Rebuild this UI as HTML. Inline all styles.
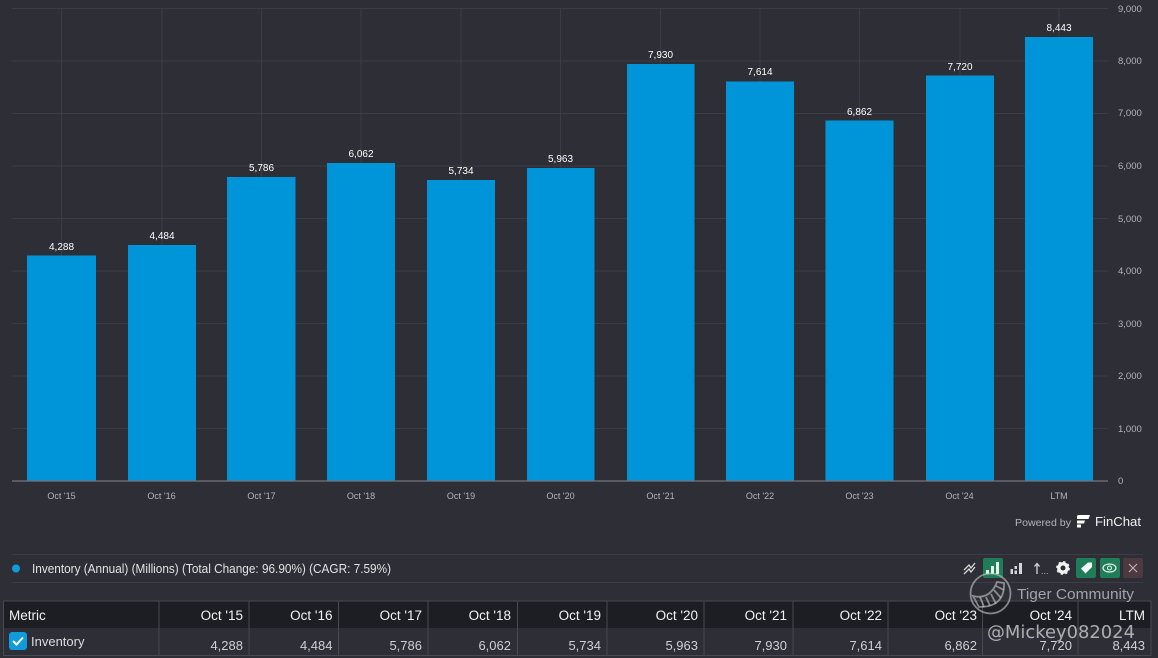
<!DOCTYPE html>
<html lang="en"><head><meta charset="utf-8"><title>Inventory chart</title>
<style>
html,body{margin:0;padding:0;background:#2d2e36;width:1158px;height:658px;overflow:hidden}
svg{display:block;font-family:"Liberation Sans",sans-serif}
.lab{font-size:10px;fill:#fff;text-anchor:middle}
.x{font-size:9px;fill:#b4b5b9;text-anchor:middle}
.y{font-size:9.5px;fill:#b4b5b9}
.h{font-size:13.5px;fill:#f2f2f3;text-anchor:end}
.v{font-size:13px;fill:#cfd0d3;text-anchor:end}
</style></head><body>
<svg width="1158" height="658" viewBox="0 0 1158 658" xmlns="http://www.w3.org/2000/svg">
<rect width="1158" height="658" fill="#2d2e36"/>
<!-- horizontal grid -->
<g stroke="#3b3c44" stroke-width="1">
<path d="M12 8.5H1108M12 61H1108M12 113.5H1108M12 166H1108M12 218.5H1108M12 271H1108M12 323.5H1108M12 376H1108M12 428.5H1108"/>
<!-- vertical grid -->
<path d="M61.5 8V481M162 8V481M261.5 8V481M361 8V481M461 8V481M560.5 8V481M660.5 8V481M760 8V481M859.5 8V481M960 8V481M1059 8V481"/>
</g>
<!-- bars -->
<g fill="#0095d9">
<rect x="27" y="255.5" width="69" height="225.5"/>
<rect x="128" y="245" width="68" height="236"/>
<rect x="227" y="177" width="68.500" height="304"/>
<rect x="327" y="163" width="68" height="318"/>
<rect x="427" y="180" width="68" height="301"/>
<rect x="527" y="168" width="67.500" height="313"/>
<rect x="627" y="64" width="67.500" height="417"/>
<rect x="726" y="81.500" width="68" height="399.500"/>
<rect x="825.500" y="120.500" width="68" height="360.500"/>
<rect x="926" y="75.500" width="68" height="405.500"/>
<rect x="1025" y="37" width="68" height="444"/>
</g>
<path d="M12 481H1108" stroke="#74757c" stroke-width="1.200"/>
<!-- bar labels -->
<text class="lab" x="61.500" y="250">4,288</text>
<text class="lab" x="162" y="239">4,484</text>
<text class="lab" x="261.500" y="171">5,786</text>
<text class="lab" x="361" y="157">6,062</text>
<text class="lab" x="461" y="174">5,734</text>
<text class="lab" x="560.500" y="162">5,963</text>
<text class="lab" x="660.500" y="58">7,930</text>
<text class="lab" x="760" y="75">7,614</text>
<text class="lab" x="859.500" y="115">6,862</text>
<text class="lab" x="960" y="70">7,720</text>
<text class="lab" x="1059" y="31">8,443</text>
<!-- x axis -->
<text class="x" x="61.500" y="499">Oct '15</text>
<text class="x" x="161.500" y="499">Oct '16</text>
<text class="x" x="261.500" y="499">Oct '17</text>
<text class="x" x="361" y="499">Oct '18</text>
<text class="x" x="461" y="499">Oct '19</text>
<text class="x" x="560.500" y="499">Oct '20</text>
<text class="x" x="660.500" y="499">Oct '21</text>
<text class="x" x="760" y="499">Oct '22</text>
<text class="x" x="859.500" y="499">Oct '23</text>
<text class="x" x="959.500" y="499">Oct '24</text>
<text class="x" x="1059" y="499">LTM</text>
<!-- y axis -->
<text class="y" x="1118" y="12">9,000</text>
<text class="y" x="1118" y="64">8,000</text>
<text class="y" x="1118" y="116">7,000</text>
<text class="y" x="1118" y="169">6,000</text>
<text class="y" x="1118" y="222">5,000</text>
<text class="y" x="1118" y="274">4,000</text>
<text class="y" x="1118" y="327">3,000</text>
<text class="y" x="1118" y="379">2,000</text>
<text class="y" x="1118" y="432">1,000</text>
<text class="y" x="1118" y="484">0</text>
<!-- powered by -->
<text x="1015" y="526" font-size="10.500" fill="#b4b5b9" textLength="56" lengthAdjust="spacingAndGlyphs">Powered by</text>
<g fill="#fff"><path d="M1077 516.500Q1077 515 1079 515H1090L1088.500 519H1077Z"/><path d="M1077 520.500H1085L1084 523.500H1077Z"/><path d="M1077 524.500H1081V527.500H1077Z"/></g>
<text x="1095" y="526" font-size="13" fill="#f2f2f3" textLength="46" lengthAdjust="spacingAndGlyphs">FinChat</text>
<!-- legend strip -->
<path d="M12 554.500H1143M12 582.500H1143" stroke="#3b3c44"/>
<circle cx="16" cy="568.500" r="4" fill="#0f9bdc"/>
<text x="32" y="573" font-size="12.500" fill="#e3e3e5" textLength="359" lengthAdjust="spacingAndGlyphs">Inventory (Annual) (Millions) (Total Change: 96.90%) (CAGR: 7.59%)</text>
<!-- toolbar -->
<path d="M964 570L969 565L971 568L975 563M964 574L969 569L971 572L975 567" fill="none" stroke="#d5d5d8" stroke-width="1.300"/>
<rect x="983" y="558" width="20" height="20" rx="2" fill="#1f7d57"/>
<g fill="#e6f3ec"><rect x="986" y="570" width="3" height="4"/><rect x="991" y="566" width="3" height="8"/><rect x="996" y="562" width="3" height="12"/></g>
<g fill="#d5d5d8"><rect x="1010.500" y="569" width="2.500" height="5"/><rect x="1014.500" y="566" width="2.500" height="3"/><rect x="1014.500" y="570.500" width="2.500" height="3.500"/><rect x="1019" y="563" width="3" height="11"/></g>
<path d="M1037 574V564M1034.500 566.500L1037 563.500L1039.500 566.500" fill="none" stroke="#d5d5d8" stroke-width="1.300"/>
<text x="1041" y="574" font-size="9" fill="#b4b5b9">...</text>
<circle cx="1063" cy="568" r="4.200" fill="none" stroke="#f2f2f2" stroke-width="3.400"/>
<circle cx="1063" cy="568" r="6" fill="none" stroke="#f2f2f2" stroke-width="1.800" stroke-dasharray="2.300 2.400"/>
<rect x="1076" y="558" width="20" height="20" rx="2" fill="#1f7d57"/>
<path d="M1081 568.500L1088 562.500H1092V567L1085.500 573.500Z" fill="#f4f8f6"/>
<rect x="1100" y="558" width="20" height="20" rx="2" fill="#1f7d57"/>
<ellipse cx="1109.500" cy="568" rx="6.500" ry="4" fill="none" stroke="#e6f3ec" stroke-width="1.200"/>
<circle cx="1109.500" cy="568" r="2" fill="none" stroke="#e6f3ec" stroke-width="1.100"/>
<rect x="1123" y="558" width="20" height="20" rx="2" fill="#4d3a41"/>
<path d="M1129 564L1137 572M1137 564L1129 572" stroke="#c3b3b6" stroke-width="1.100"/>
<!-- table -->
<rect x="3.500" y="601" width="1147.500" height="27" fill="#1d1e23"/>
<rect x="3.500" y="601" width="1147.500" height="54.500" fill="none" stroke="#484951"/>
<path d="M159 601V655M249 601V655M338.500 601V655M428 601V655M517.500 601V655M607 601V655M704 601V655M793 601V655M888 601V655M982.500 601V655M1078 601V655" stroke="#484951"/>
<text x="9" y="620" font-size="13.500" fill="#f2f2f3">Metric</text>
<text class="h" x="243" y="620">Oct '15</text>
<text class="h" x="332.500" y="620">Oct '16</text>
<text class="h" x="422" y="620">Oct '17</text>
<text class="h" x="511" y="620">Oct '18</text>
<text class="h" x="601" y="620">Oct '19</text>
<text class="h" x="698" y="620">Oct '20</text>
<text class="h" x="787" y="620">Oct '21</text>
<text class="h" x="882" y="620">Oct '22</text>
<text class="h" x="977" y="620">Oct '23</text>
<text class="h" x="1072" y="620">Oct '24</text>
<text class="h" x="1145" y="620">LTM</text>
<rect x="9" y="632" width="18" height="18" rx="3" fill="#0f9bdc"/>
<path d="M13 641L16.500 644.500L23 637.500" fill="none" stroke="#fff" stroke-width="2"/>
<text x="31" y="646" font-size="13" fill="#dedee0">Inventory</text>
<text class="v" x="243" y="650">4,288</text>
<text class="v" x="332.500" y="650">4,484</text>
<text class="v" x="422" y="650">5,786</text>
<text class="v" x="511" y="650">6,062</text>
<text class="v" x="601" y="650">5,734</text>
<text class="v" x="698" y="650">5,963</text>
<text class="v" x="787" y="650">7,930</text>
<text class="v" x="882" y="650">7,614</text>
<text class="v" x="977" y="650">6,862</text>
<text class="v" x="1072" y="650">7,720</text>
<text class="v" x="1145" y="650">8,443</text>
<!-- watermark -->
<g fill="none" stroke="#c9cacc" stroke-opacity=".6">
<circle cx="990.500" cy="593.500" r="20" stroke-width="1.800"/>
<path d="M973 596Q990 600 997 582L1004 583Q1005 607 979 607Z" stroke-width="1.800"/>
<path d="M980 597L984 607M986 597L990 606M991 594L996 604M994 590L1001 598M996 586L1004 590" stroke-width="1.800"/>
</g>
<text x="1017" y="599" font-size="14.500" fill="#a3a4a8" textLength="117" lengthAdjust="spacingAndGlyphs">Tiger Community</text>
<text x="987" y="638" font-size="17.500" fill="#c9cacc" fill-opacity=".82" style="font-family:'DejaVu Sans',sans-serif" textLength="148" lengthAdjust="spacingAndGlyphs">@Mickey082024</text>
</svg>
</body></html>
